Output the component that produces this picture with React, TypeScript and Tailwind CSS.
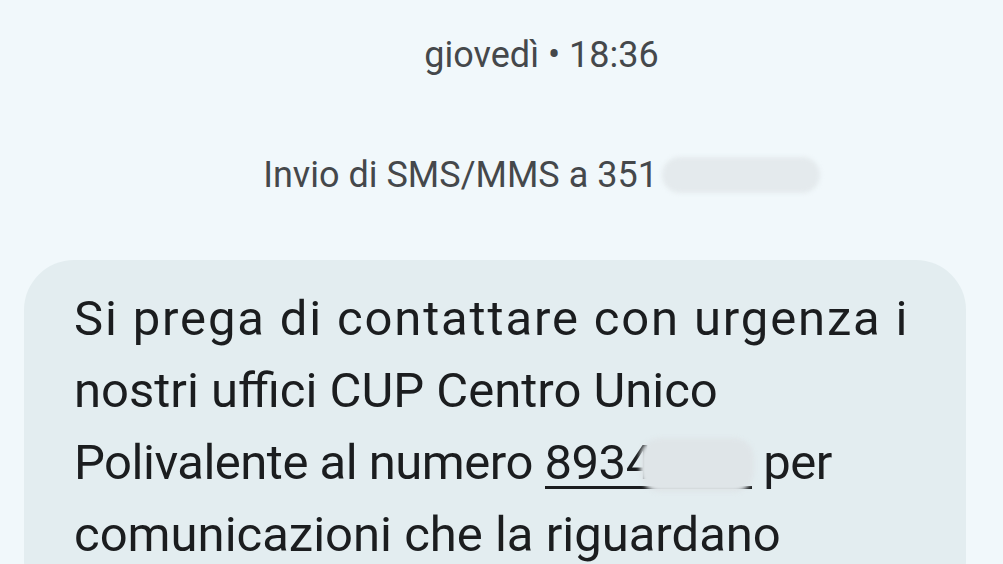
import React from "react";

export default function App() {
  return (
    <div
      className="w-[1003px] h-[564px] overflow-hidden bg-[#f1f8fb] flex flex-col"
      style={{ fontFamily: "Roboto, 'Noto Sans', sans-serif" }}
    >
      <div className="pt-[33px] pl-[80px] text-center text-[36px] leading-[44px] text-[#45484b]">
        giovedì • 18:36
      </div>
      <div className="mt-[76px] pl-[80px] flex justify-center items-center text-[36px] leading-[44px] text-[#45484b]">
        <span>Invio di SMS/MMS a 351</span>
        <span className="ml-[4px] w-[158px] h-[36px] rounded-full bg-[#e4eaed] blur-[2px]" />
      </div>
      <div className="mt-[63px] mx-[24px] w-[942px] rounded-[50px] bg-[#e3edf0] pl-[50px] pt-[23px] pb-[40px] text-[49px] leading-[72px] text-[#1b1d1f]">
        <div className="tracking-[1.85px]">Si prega di contattare con urgenza i</div>
        <div>nostri uffici CUP Centro Unico</div>
        <div className="tracking-[-0.5px]">
          Polivalente al numero{" "}
          <span className="relative">
            8934
            <span className="inline-block w-[99px]" />
            <span className="absolute left-0 top-[52px] w-[207px] h-[3px] bg-[#1b1d1f]" />
            <span className="absolute left-[95px] top-[4px] w-[114px] h-[54px] rounded-[20px] bg-[#dfe5e8] blur-[2px]" />
          </span>{" "}
          per
        </div>
        <div>comunicazioni che la riguardano</div>
      </div>
    </div>
  );
}
